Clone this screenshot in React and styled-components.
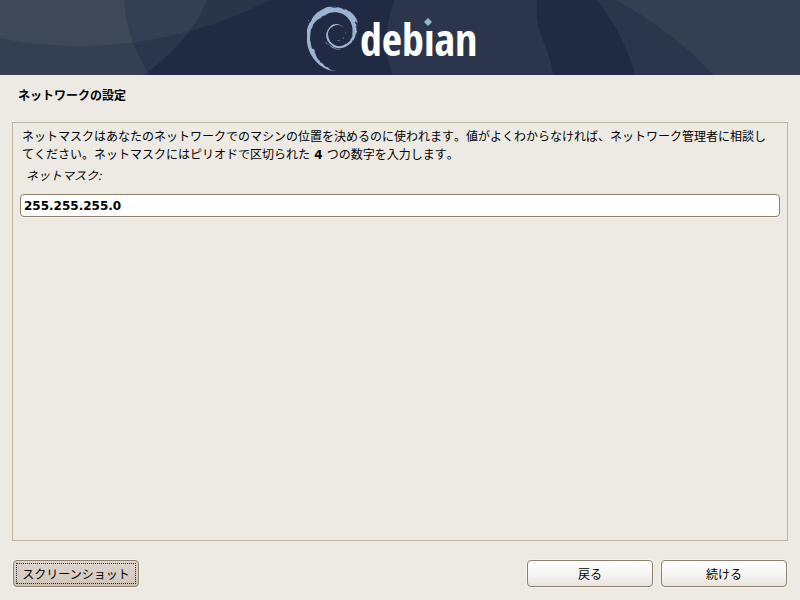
import { useState } from 'react'
import styled, { createGlobalStyle } from 'styled-components'
import { SiDebian } from 'react-icons/si'

const GlobalStyle = createGlobalStyle`
  * {
    box-sizing: border-box;
  }

  body {
    margin: 0;
    background-color: #edeae3;
    color: #000;
    font-family: "Noto Sans CJK JP", sans-serif;
    font-size: 12px;
    line-height: 18px;
    font-kerning: none;
    text-spacing-trim: space-all;
  }
`

const Page = styled.div`
  display: flex;
  flex-direction: column;
  min-height: 100vh;
`

const Banner = styled.header`
  position: relative;
  display: flex;
  justify-content: center;
  height: 75px;
  background-color: #202b43;
  overflow: hidden;
`

const BannerArt = styled.svg`
  position: absolute;
  inset: 0;
  width: 100%;
  height: 100%;
`

const Logo = styled.svg`
  position: relative;
  width: 186px;
  height: 75px;
`

const Title = styled.h1`
  margin: 0;
  padding: 11px 18px 18px;
  font-size: 12px;
  font-weight: 700;
`

const Panel = styled.form`
  flex: 1;
  margin: 0 12px;
  padding: 4px 7px;
  border: 1px solid #bfb5a3;
`

const Description = styled.p`
  margin: 0;
  padding: 0 8px 0 2px;
`

const Digit = styled.b`
  font-family: "DejaVu Sans", sans-serif;
`

const Label = styled.label`
  display: block;
  padding: 2px 6px 10px;
  font-style: italic;
`

const Input = styled.input`
  display: block;
  width: 100%;
  height: 23px;
  padding: 0 3px;
  border: 1px solid #8c7f6c;
  border-radius: 4px;
  background-color: #fff;
  box-shadow: 0 1px 0 #f8f6f2;
  color: #000;
  font-family: "DejaVu Sans", sans-serif;
  font-size: 12px;
  font-weight: 700;
  outline: none;
`

const Footer = styled.footer`
  display: flex;
  gap: 8px;
  padding: 19px 13px 13px;
`

const Button = styled.button`
  width: 126px;
  height: 27px;
  padding: 0;
  border: 1px solid #8c7f6c;
  border-radius: 4px;
  background: linear-gradient(#fff, #f5f3f0 60%, #e8e3dc);
  box-shadow: 0 0 0 1px #f5f2ec;
  color: #000;
  font-family: inherit;
  font-size: 12px;
`

const FocusedButton = styled(Button)`
  margin-right: auto;
  background: linear-gradient(#ddd5cb, #d6cec3 60%, #cdc4b8);
  outline: 1px dotted #2b2622;
  outline-offset: -4px;
`

function DebianBanner() {
  return (
    <Banner>
      <BannerArt viewBox="0 0 800 75" preserveAspectRatio="none" aria-hidden="true">
        <g fill="#fff" fillOpacity="0.05">
          <path d="M0 0H270Q180 46 80 46Q36 46 0 38Z" fill="#ffffe0" />
          <path d="M0 0H207Q188 45 143 75H0Z" />
          <path d="M0 0H124Q127 43 150 75H0Z" fill="#ffffc4" />
          <path d="M395 0Q380 35 392 75H553C550 45 534 35 537 0Z" />
          <path d="M597 0Q625 36 635 75H800V0Z" />
          <path d="M616 0Q672 31 714 75H800V0Z" fill="#ffffc4" />
        </g>
      </BannerArt>
      <Logo viewBox="0 0 186 75" role="img" aria-label="debian">
        <SiDebian x="-7" y="6" size={65} color="#9bb4d1" />
        <text
          x="53"
          y="56"
          fill="#fff"
          fontFamily="'Open Sans Condensed', 'Roboto Condensed', sans-serif"
          fontWeight="700"
          fontSize="44"
        >
          debian
        </text>
        {/* the dot of the i is a blue diamond */}
        <path d="M116 20H126V31H116Z" fill="#2b354c" />
        <path d="M121 18L125 22L121 26L117 22Z" fill="#9bb4d1" />
      </Logo>
    </Banner>
  )
}

export default function App() {
  const [netmask, setNetmask] = useState('255.255.255.0')

  return (
    <Page>
      <GlobalStyle />
      <DebianBanner />
      <Title>ネットワークの設定</Title>
      <Panel id="network" onSubmit={(e) => e.preventDefault()}>
        <Description>
          ネットマスクはあなたのネットワークでのマシンの位置を決めるのに使われます。値がよくわからなければ、ネットワーク管理者に相談してください。ネットマスクにはピリオドで区切られた<Digit> 4 </Digit>つの数字を入力します。
        </Description>
        <Label htmlFor="netmask">ネットマスク:</Label>
        <Input id="netmask" type="text" value={netmask} onChange={(e) => setNetmask(e.target.value)} />
      </Panel>
      <Footer>
        <FocusedButton type="button">スクリーンショット</FocusedButton>
        <Button type="button">戻る</Button>
        <Button type="submit" form="network">続ける</Button>
      </Footer>
    </Page>
  )
}
